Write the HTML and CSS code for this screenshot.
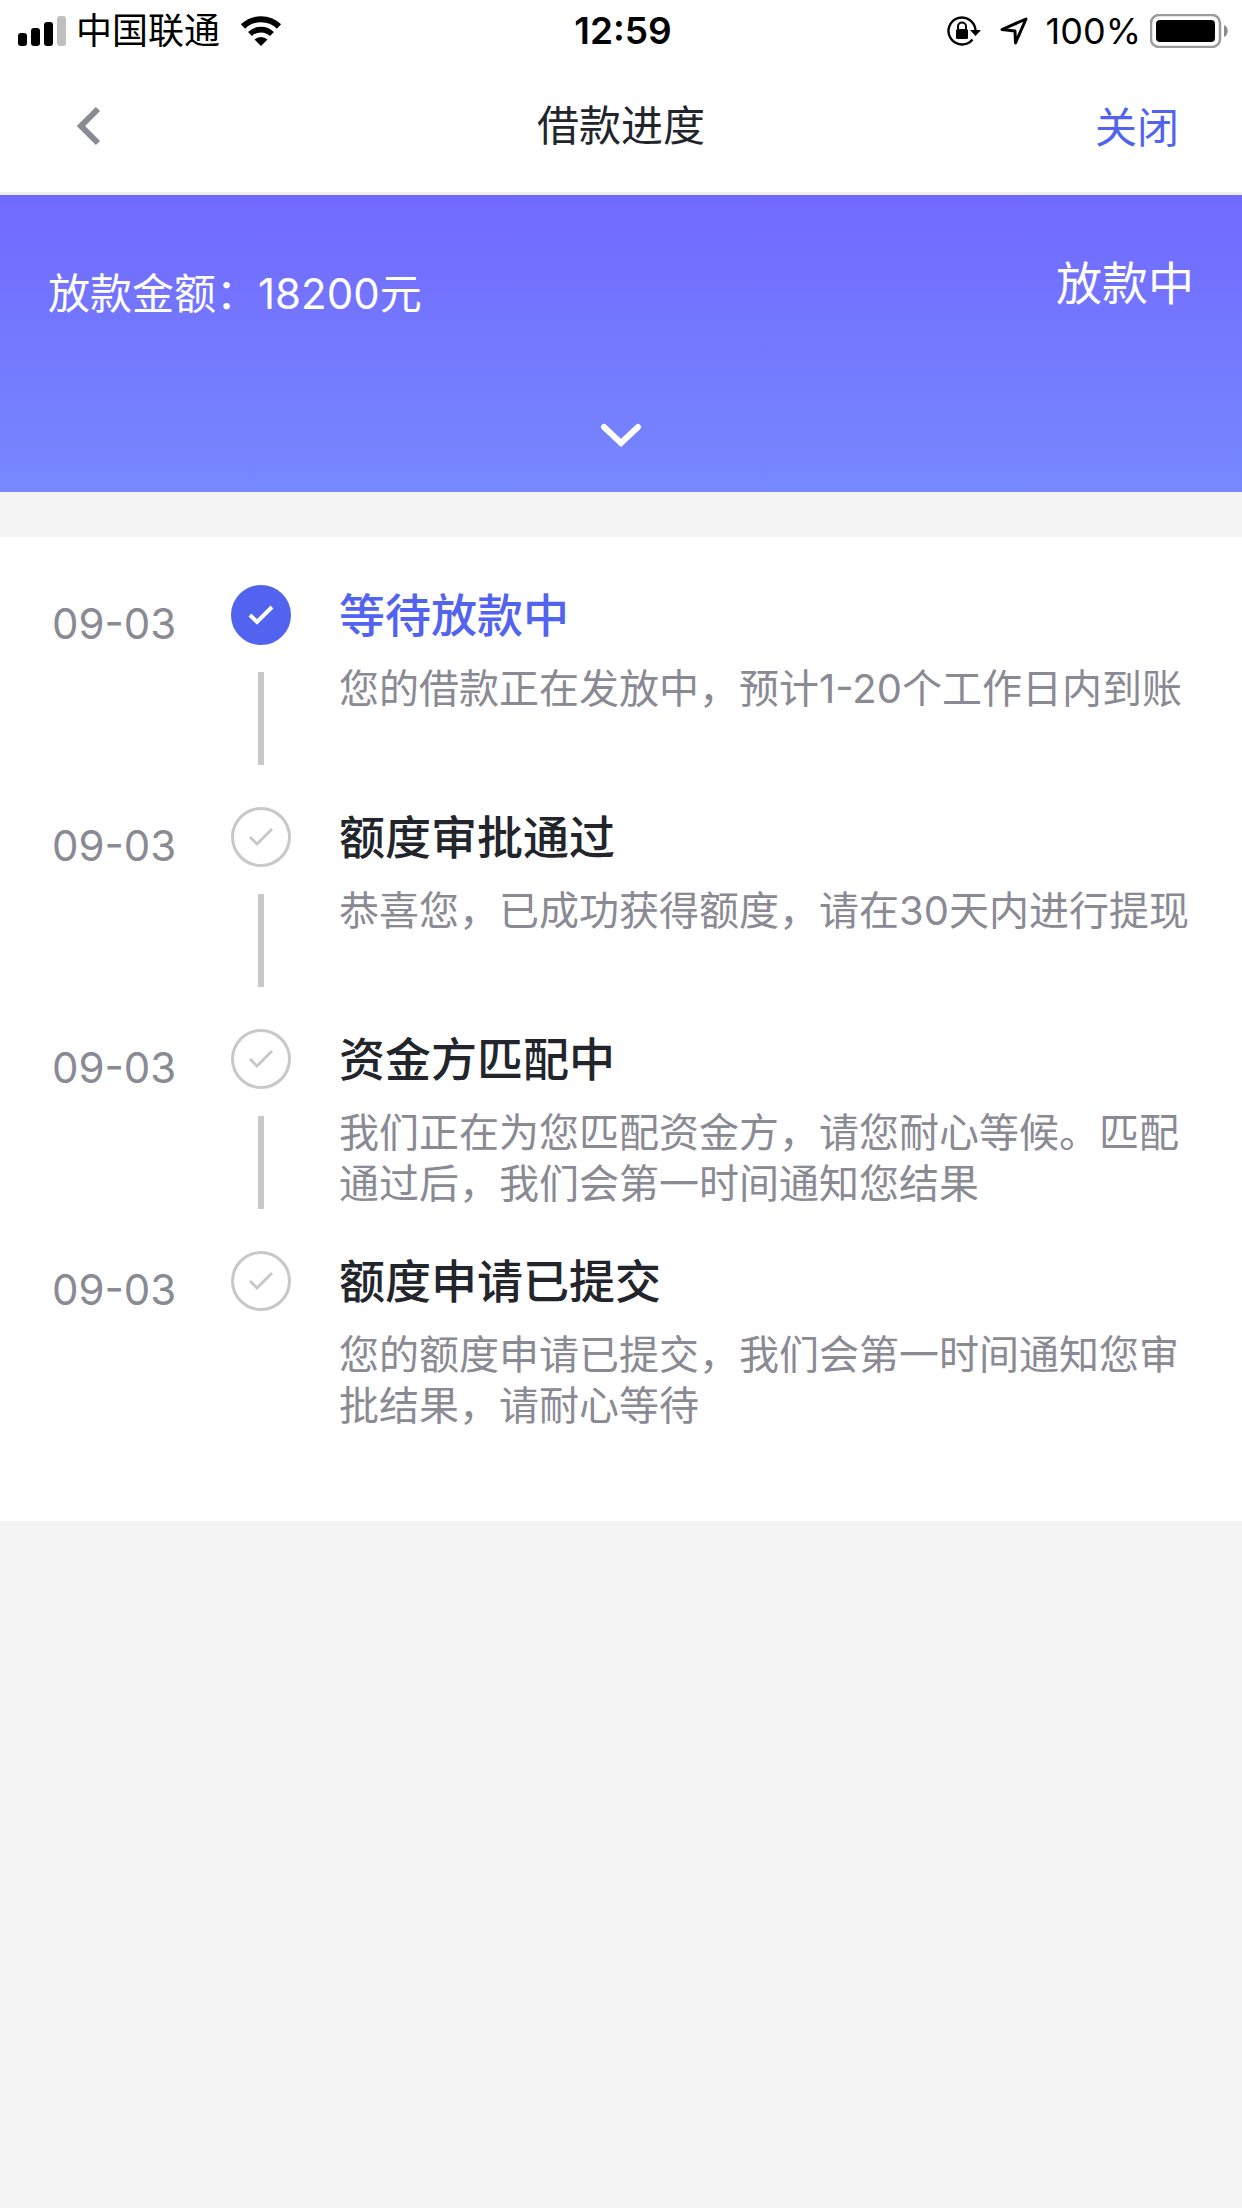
FILE: index.html
```html
<!DOCTYPE html>
<html lang="zh-CN">
<head>
    <meta charset="UTF-8">
    <meta name="viewport" content="width=device-width, initial-scale=1.0">
    <title>借款进度</title>
    <link rel="stylesheet" href="styles.css">
</head>
<body>
    <div class="status-bar">
        <div class="status-left">
            <svg class="signal" width="48" height="30" viewBox="0 0 48 30">
                <rect x="0" y="17" width="9" height="13" rx="3"/>
                <rect x="13" y="12" width="9" height="18" rx="3"/>
                <rect x="26" y="6" width="9" height="24" rx="3"/>
                <rect x="39" y="0" width="9" height="30" rx="3" fill="#bfbfbf"/>
            </svg>
            <span>中国联通</span>
            <svg class="wifi" width="42" height="30" viewBox="0 0 42 30">
                <path d="M3 10.5a26 26 0 0 1 36 0" fill="none" stroke="#000" stroke-width="6"/>
                <path d="M10 18a16 16 0 0 1 22 0" fill="none" stroke="#000" stroke-width="5.6"/>
                <path d="M21 30l-6.5-6.4a9.5 9.5 0 0 1 13 0z"/>
            </svg>
        </div>
        <time class="clock">12:59</time>
        <div class="status-right">
            <svg width="34" height="30" viewBox="0 0 34 30">
                <path d="M25.500 23.500A13.500 13.500 0 1 1 28.500 14.500" fill="none" stroke="#000" stroke-width="2.4"/>
                <path d="M23 14h11l-5.500 6z"/>
                <rect x="9" y="13" width="12" height="10" rx="1.5"/>
                <path d="M11 14v-3.500a4 4 0 0 1 8 0V14" fill="none" stroke="#000" stroke-width="2"/>
            </svg>
            <svg class="location" width="28" height="28" viewBox="0 0 28 28">
                <path d="M2 12.500L26 2 15.500 26l-.5-12z" fill="none" stroke="#000" stroke-width="3" stroke-linejoin="round"/>
            </svg>
            <span>100%</span>
            <svg class="battery" width="78" height="34" viewBox="0 0 78 34">
                <rect x="1" y="1" width="69" height="32" rx="8" fill="none" stroke="#9b9b9b" stroke-width="2.5"/>
                <rect x="6" y="6" width="59" height="22" rx="4"/>
                <path d="M74 11c5 2 5 10 0 12z" fill="#8c8c8c"/>
            </svg>
        </div>
    </div>

    <header class="nav">
        <button type="button" class="back" aria-label="返回">
            <svg width="24" height="40" viewBox="0 0 24 40">
                <path d="M21 3L4 20l17 17" fill="none" stroke="#8a8a94" stroke-width="6"/>
            </svg>
        </button>
        <h1>借款进度</h1>
        <a href="#" class="close">关闭</a>
    </header>

    <section class="summary">
        <div class="summary-row">
            <span class="amount">放款金额：18200元</span>
            <span class="state">放款中</span>
        </div>
        <button type="button" class="expand" aria-label="展开">
            <svg width="42" height="24" viewBox="0 0 42 24">
                <path d="M4 4l17 16L38 4" fill="none" stroke="#fff" stroke-width="6" stroke-linecap="round"/>
            </svg>
        </button>
    </section>

    <ol class="timeline">
        <li class="step active">
            <time class="date">09-03</time>
            <div class="node">
                <span class="circle">
                    <svg width="26" height="20" viewBox="0 0 26 20"><path d="M2 10l7 7L24 2"/></svg>
                </span>
            </div>
            <div class="detail">
                <h2>等待放款中</h2>
                <p>您的借款正在发放中，预计1-20个工作日内到账</p>
            </div>
        </li>
        <li class="step">
            <time class="date">09-03</time>
            <div class="node">
                <span class="circle">
                    <svg width="26" height="20" viewBox="0 0 26 20"><path d="M2 10l7 7L24 2"/></svg>
                </span>
            </div>
            <div class="detail">
                <h2>额度审批通过</h2>
                <p>恭喜您，已成功获得额度，请在30天内进行提现</p>
            </div>
        </li>
        <li class="step">
            <time class="date">09-03</time>
            <div class="node">
                <span class="circle">
                    <svg width="26" height="20" viewBox="0 0 26 20"><path d="M2 10l7 7L24 2"/></svg>
                </span>
            </div>
            <div class="detail">
                <h2>资金方匹配中</h2>
                <p>我们正在为您匹配资金方，请您耐心等候。匹配通过后，我们会第一时间通知您结果</p>
            </div>
        </li>
        <li class="step">
            <time class="date">09-03</time>
            <div class="node">
                <span class="circle">
                    <svg width="26" height="20" viewBox="0 0 26 20"><path d="M2 10l7 7L24 2"/></svg>
                </span>
            </div>
            <div class="detail">
                <h2>额度申请已提交</h2>
                <p>您的额度申请已提交，我们会第一时间通知您审批结果，请耐心等待</p>
            </div>
        </li>
    </ol>
</body>
</html>
```

FILE: styles.css
```css
* {
    box-sizing: border-box;
}

body {
    margin: 0;
    background-color: #f4f4f4;
    color: #23252d;
    font-family: Inter, "Noto Sans CJK SC", sans-serif;
    font-size: 42px;
}

h1, h2, p, ol {
    margin: 0;
    padding: 0;
}

button {
    padding: 0;
    border: none;
    background: none;
    cursor: pointer;
}

svg {
    display: block;
}

/* status bar */
.status-bar {
    display: grid;
    grid-template-columns: 1fr auto 1fr;
    align-items: center;
    height: 60px;
    padding: 0 14px 0 18px;
    background-color: #fff;
    color: #000;
    font-size: 36px;
    line-height: 62px;
}

.status-left, .status-right {
    display: flex;
    align-items: center;
}

.status-right {
    justify-content: flex-end;
}

.signal {
    margin-right: 10px;
}

.wifi {
    margin-left: 20px;
}

.clock {
    font-size: 37px;
    font-weight: 600;
}

.location {
    margin: 0 18px 0 19px;
}

.battery {
    margin-left: 9px;
}

/* navigation */
.nav {
    display: grid;
    grid-template-columns: 1fr auto 1fr;
    align-items: center;
    height: 135px;
    padding: 0 63px;
    background-color: #fff;
    border-bottom: 3px solid #eee;
}

.nav h1 {
    font-size: 42px;
    font-weight: 400;
    line-height: 60px;
}

.back {
    justify-self: start;
    padding: 0 14px;
}

.close {
    justify-self: end;
    padding-top: 4px;
    color: #5263ef;
    line-height: 60px;
    text-decoration: none;
}

/* loan summary */
.summary {
    padding: 58px 48px 27px;
    background: linear-gradient(#7169ff, #7688ff);
    color: #fff;
}

.summary-row {
    display: flex;
    justify-content: space-between;
    align-items: flex-start;
}

.amount {
    line-height: 82px;
}

.state {
    font-size: 46px;
    line-height: 60px;
}

.expand {
    display: flex;
    justify-content: center;
    align-items: center;
    width: 60px;
    height: 60px;
    margin: 70px auto 0;
}

/* progress steps */
.timeline {
    margin-top: 45px;
    padding: 48px 40px 48px 52px;
    background-color: #fff;
    list-style: none;
}

.step {
    display: grid;
    grid-template-columns: 179px 60px 1fr;
    min-height: 222px;
    padding-bottom: 42px;
}

.date {
    color: #8a8a94;
    line-height: 78px;
}

.node {
    display: flex;
    flex-direction: column;
    align-items: center;
}

.circle {
    display: flex;
    justify-content: center;
    align-items: center;
    width: 60px;
    height: 60px;
    border: 3px solid #c8c8c8;
    border-radius: 50%;
}

.circle path {
    fill: none;
    stroke: #c8c8c8;
    stroke-width: 3;
}

/* line down to the next step */
.step:not(:last-child) .node::after {
    content: "";
    flex: 1;
    width: 6px;
    margin-top: 27px;
    background-color: #c8c8c8;
}

.detail {
    padding-left: 48px;
}

.detail h2 {
    font-size: 46px;
    font-weight: 500;
    line-height: 60px;
}

.detail p {
    margin-top: 18px;
    color: #8a8a94;
    font-size: 40px;
    line-height: 51px;
}

.active .circle {
    border-color: #5263ef;
    background-color: #5263ef;
}

.active .circle path {
    stroke: #fff;
    stroke-width: 4;
}

.active h2 {
    color: #5263ef;
}
```
